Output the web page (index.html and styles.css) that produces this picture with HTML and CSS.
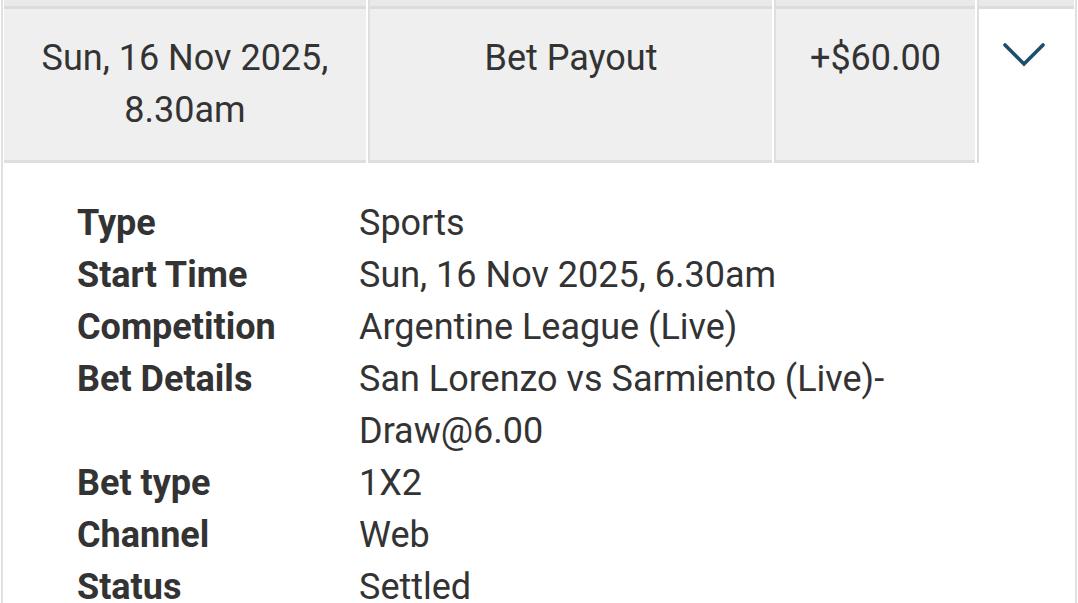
FILE: index.html
```html
<!DOCTYPE html>
<html>
<head>
<meta charset="utf-8">
<link rel="stylesheet" href="styles.css">
</head>
<body>
<div class="list">
  <div class="row row-prev">
    <div class="cell c1"></div>
    <div class="cell c2"></div>
    <div class="cell c3"></div>
    <div class="cell c4"></div>
  </div>
  <div class="row row-open">
    <div class="cell c1">Sun, 16 Nov 2025,<br>8.30am</div>
    <div class="cell c2">Bet Payout</div>
    <div class="cell c3">+$60.00</div>
    <div class="cell c4 toggle">
      <svg class="chev" width="44" height="26" viewBox="0 0 44 26">
        <polyline points="2,3 21,22 40,3" fill="none" stroke="#1d4d6d" stroke-width="3.6" stroke-linecap="round" stroke-linejoin="miter"/>
      </svg>
    </div>
  </div>
  <div class="details">
    <div class="label">Type</div><div class="value">Sports</div>
    <div class="label">Start Time</div><div class="value">Sun, 16 Nov 2025, 6.30am</div>
    <div class="label">Competition</div><div class="value">Argentine League (Live)</div>
    <div class="label">Bet Details</div><div class="value">San Lorenzo vs Sarmiento (Live)-Draw@6.00</div>
    <div class="label">Bet type</div><div class="value">1X2</div>
    <div class="label">Channel</div><div class="value">Web</div>
    <div class="label">Status</div><div class="value">Settled</div>
  </div>
</div>
</body>
</html>
```
FILE: styles.css
```css
html, body {
  margin: 0;
  padding: 0;
  background: #ffffff;
}
body {
  font-family: Roboto, "Liberation Sans", sans-serif;
  color: #333333;
  overflow: hidden;
}
.list {
  margin-left: 1px;
  width: 1070px;
  border-left: 2px solid #e0e0e0;
  border-right: 2px solid #e0e0e0;
  padding-left: 1px;
  padding-right: 1px;
  min-height: 620px;
}
.row {
  display: flex;
}
.cell {
  box-sizing: border-box;
  background: #efefef;
  border-bottom: 3px solid #dedede;
  text-align: center;
  font-size: 36px;
  line-height: 52px;
}
.c1 { width: 362px; }
.c2, .c3, .c4 {
  margin-left: 2px;
  border-left: 2px solid #dedede;
}
.c2 { width: 404px; }
.c3 { width: 201px; }
.c4 { flex: 1; }
.row-prev .cell {
  height: 9px;
  background: #e9e9e9;
  border-bottom: 3px solid #dcdcdc;
}
.row-open .cell {
  height: 154px;
  padding-top: 23px;
}
.row-open .toggle {
  background: #ffffff;
  border-bottom: none;
  text-align: left;
  padding-left: 24px;
  padding-top: 33px;
}
.chev {
  display: block;
}
.details {
  display: grid;
  grid-template-columns: 282px 600px;
  padding-left: 73px;
  padding-top: 34px;
  font-size: 36px;
  line-height: 52px;
}
.label {
  font-weight: 700;
}
.value {
  font-weight: 400;
}
```
